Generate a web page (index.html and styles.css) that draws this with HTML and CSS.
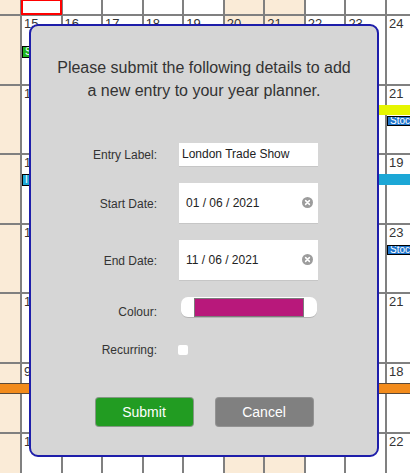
FILE: index.html
```html
<!DOCTYPE html>
<html lang="en">
<head>
<meta charset="utf-8">
<title>Year Planner – New Entry</title>
<link rel="stylesheet" href="styles.css">
</head>
<body>
<div class="planner">
  <div class="grid">
    <div class="cell off"></div><div class="cell today"></div><div class="cell"></div><div class="cell"></div><div class="cell"></div><div class="cell"></div><div class="cell off"></div><div class="cell off"></div><div class="cell"></div><div class="cell"></div><div class="cell"></div>

    <div class="cell off"></div><div class="cell">15</div><div class="cell">16</div><div class="cell">17</div><div class="cell">18</div><div class="cell">19</div><div class="cell off">20</div><div class="cell off">21</div><div class="cell">22</div><div class="cell">23</div><div class="cell">24</div>

    <div class="cell off"></div><div class="cell">12</div><div class="cell"></div><div class="cell"></div><div class="cell"></div><div class="cell"></div><div class="cell off"></div><div class="cell off"></div><div class="cell"></div><div class="cell"></div><div class="cell">21</div>

    <div class="cell off"></div><div class="cell">10</div><div class="cell"></div><div class="cell"></div><div class="cell"></div><div class="cell"></div><div class="cell off"></div><div class="cell off"></div><div class="cell"></div><div class="cell"></div><div class="cell">19</div>

    <div class="cell off"></div><div class="cell">14</div><div class="cell"></div><div class="cell"></div><div class="cell"></div><div class="cell"></div><div class="cell off"></div><div class="cell off"></div><div class="cell"></div><div class="cell"></div><div class="cell">23</div>

    <div class="cell off"></div><div class="cell">12</div><div class="cell"></div><div class="cell"></div><div class="cell"></div><div class="cell"></div><div class="cell off"></div><div class="cell off"></div><div class="cell"></div><div class="cell"></div><div class="cell">21</div>

    <div class="cell off"></div><div class="cell">9</div><div class="cell"></div><div class="cell"></div><div class="cell"></div><div class="cell"></div><div class="cell off"></div><div class="cell off"></div><div class="cell"></div><div class="cell"></div><div class="cell">18</div>

    <div class="cell off"></div><div class="cell">13</div><div class="cell"></div><div class="cell"></div><div class="cell"></div><div class="cell"></div><div class="cell off"></div><div class="cell off"></div><div class="cell"></div><div class="cell"></div><div class="cell">22</div>
  </div>

  <div class="ev ev-green">S</div>
  <div class="ev ev-yellow"></div>
  <div class="ev ev-stock ev-stock-1">Stoc</div>
  <div class="ev ev-cyan-label">I</div>
  <div class="ev ev-cyan"></div>
  <div class="ev ev-stock ev-stock-2">Stoc</div>
  <div class="ev ev-orange"></div>

  <div class="modal">
    <p class="intro">Please submit the following details to add a new entry to your year planner.</p>
    <form class="form">
      <label class="lbl">Entry Label:</label>
      <div class="field text-field"><input class="txt" type="text" value="London Trade Show"></div>

      <label class="lbl">Start Date:</label>
      <div class="field date-field">
        <span class="date-val">01 / 06 / 2021</span>
        <svg class="clear" width="11" height="11" viewBox="0 0 11 11"><circle cx="5.5" cy="5.5" r="5.5" fill="#9c9c9c"/><path d="M3.6 3.6 L7.4 7.4 M7.4 3.6 L3.6 7.4" stroke="#fff" stroke-width="1.5" stroke-linecap="round"/></svg>
      </div>

      <label class="lbl">End Date:</label>
      <div class="field date-field">
        <span class="date-val">11 / 06 / 2021</span>
        <svg class="clear" width="11" height="11" viewBox="0 0 11 11"><circle cx="5.5" cy="5.5" r="5.5" fill="#9c9c9c"/><path d="M3.6 3.6 L7.4 7.4 M7.4 3.6 L3.6 7.4" stroke="#fff" stroke-width="1.5" stroke-linecap="round"/></svg>
      </div>

      <label class="lbl lbl-colour">Colour:</label>
      <div class="colour-field"><div class="swatch"></div></div>

      <label class="lbl">Recurring:</label>
      <div class="check-wrap"><input class="check" type="checkbox"></div>
    </form>
    <div class="actions">
      <button class="btn btn-submit" type="button">Submit</button>
      <button class="btn btn-cancel" type="button">Cancel</button>
    </div>
  </div>
</div>
</body>
</html>
```

FILE: styles.css
```css
html, body {
  margin: 0;
  padding: 0;
  overflow: hidden;
  background: #fff;
}

body {
  font-family: "Liberation Sans", Arial, sans-serif;
}

.planner {
  position: relative;
  width: 410px;
  height: 473px;
  overflow: hidden;
}

.grid {
  display: grid;
  grid-template-columns: 20px repeat(10, 38.56px);
  grid-template-rows: 14px repeat(7, 67.6px);
  gap: 2px;
  background: #808080;
  width: max-content;
}

.cell {
  background: #fff;
  color: #333;
  font-size: 13px;
  line-height: 15px;
  padding: 0 2px;
}

.cell.off {
  background: #faebd7;
}

.cell.today {
  box-shadow: 0 0 0 1px #f00, inset 0 0 0 1px #f00;
}

/* event bars */
.ev {
  position: absolute;
  box-sizing: border-box;
  overflow: hidden;
  white-space: nowrap;
  color: #fff;
  font-size: 10px;
  line-height: 9px;
}

.ev-green {
  left: 22px;
  top: 46px;
  width: 70px;
  height: 12px;
  background: #21b421;
  border: 1px solid #000;
  padding-left: 2px;
  line-height: 10px;
}

.ev-yellow {
  left: 250px;
  top: 105px;
  width: 170px;
  height: 10px;
  background: #e6f500;
}

.ev-stock {
  left: 387px;
  width: 60px;
  height: 10px;
  background: #1f74cc;
  border: 1px solid #000;
  padding-left: 2px;
  line-height: 8px;
}

.ev-stock-1 { top: 116px; }
.ev-stock-2 { top: 245px; }

.ev-cyan-label {
  left: 22px;
  top: 174px;
  width: 60px;
  height: 12px;
  background: #1ca7d6;
  border: 1px solid #000;
  padding-left: 2px;
  line-height: 10px;
}

.ev-cyan {
  left: 82px;
  top: 174px;
  width: 340px;
  height: 11px;
  background: #1ca7d6;
}

.ev-orange {
  left: 0;
  top: 383px;
  width: 410px;
  height: 11px;
  background: #f28b1c;
  border-top: 1px solid #5a4a3a;
  border-bottom: 1px solid #5a4a3a;
}

/* modal */
.modal {
  position: absolute;
  left: 29px;
  top: 24px;
  width: 350px;
  height: 433px;
  box-sizing: border-box;
  border: 2px solid #1e1eaa;
  border-radius: 9px;
  background: #d6d6d6;
  padding-top: 30px;
}

.intro {
  margin: 0;
  padding: 0 24px;
  text-align: center;
  font-size: 16px;
  line-height: 23px;
  color: #333;
}

.form {
  display: grid;
  grid-template-columns: 126px 139px;
  grid-template-rows: 25px 41px 41px 21px 32px;
  column-gap: 22px;
  row-gap: 16px;
  align-items: center;
  margin: 40px 0 0;
}

.lbl {
  text-align: right;
  font-size: 12px;
  line-height: 14px;
  color: #333;
}

.lbl-colour {
  padding-top: 9px;
}

.field {
  box-sizing: border-box;
  background: #fff;
  border-bottom: 1px solid #c6c6c6;
}

.text-field {
  height: 24px;
  display: flex;
}

.txt {
  flex: 1;
  min-width: 0;
  border: none;
  outline: none;
  background: transparent;
  margin: 0;
  padding: 0 3px;
  font-family: "Liberation Sans", Arial, sans-serif;
  font-size: 12px;
  color: #222;
}

.date-field {
  height: 41px;
  display: flex;
  align-items: center;
  justify-content: space-between;
  padding: 0 5px 0 7px;
  font-size: 12px;
  color: #222;
}

.clear {
  display: block;
  margin-top: -1px;
}

.colour-field {
  box-sizing: border-box;
  width: 136px;
  height: 21px;
  margin-left: 2px;
  padding: 1px 13px 0;
  background: #fff;
  border-radius: 7px;
  border-bottom: 1px solid #b4b4b4;
}

.swatch {
  box-sizing: border-box;
  height: 19px;
  background: #b8187b;
  border: 1px solid #7c7c7c;
}

.check-wrap {
  display: flex;
  align-items: center;
}

.check {
  appearance: none;
  -webkit-appearance: none;
  width: 10px;
  height: 10px;
  margin: 0 0 0 -1px;
  background: #fff;
  border: none;
  border-radius: 2px;
}

.actions {
  display: flex;
  justify-content: center;
  gap: 21px;
  margin-top: 31px;
}

.btn {
  box-sizing: border-box;
  width: 99px;
  height: 30px;
  border: 1px solid rgba(150, 150, 150, 0.85);
  border-radius: 4px;
  color: #fff;
  font-family: "Liberation Sans", Arial, sans-serif;
  font-size: 14px;
  padding: 0;
}

.btn-submit {
  background: #229c22;
}

.btn-cancel {
  background: #808080;
}
```
